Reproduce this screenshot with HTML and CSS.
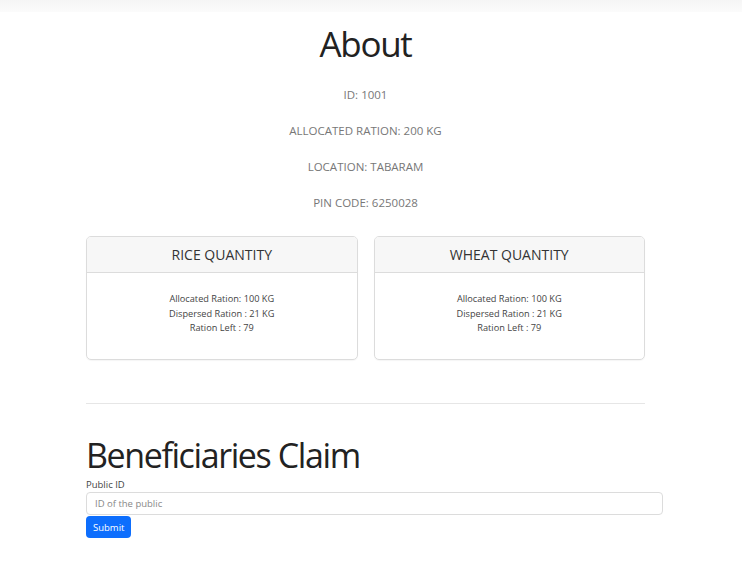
FILE: index.html
```html
<!DOCTYPE html>
<html>
<head>
<meta charset="utf-8">
<link rel="stylesheet" href="styles.css">
</head>
<body>
<div class="topbar"></div>
<main class="container">
  <section class="about">
    <h2 class="about-title">About</h2>
    <p class="info">ID: 1001</p>
    <p class="info">ALLOCATED RATION: 200 KG</p>
    <p class="info">LOCATION: TABARAM</p>
    <p class="info">PIN CODE: 6250028</p>
  </section>
  <section class="cards">
    <div class="card">
      <div class="card-header">RICE QUANTITY</div>
      <div class="card-body">
        <div>Allocated Ration: 100 KG</div>
        <div>Dispersed Ration : 21 KG</div>
        <div>Ration Left : 79</div>
      </div>
    </div>
    <div class="card">
      <div class="card-header">WHEAT QUANTITY</div>
      <div class="card-body">
        <div>Allocated Ration: 100 KG</div>
        <div>Dispersed Ration : 21 KG</div>
        <div>Ration Left : 79</div>
      </div>
    </div>
  </section>
  <hr class="divider">
  <section class="claim">
    <h1 class="claim-title">Beneficiaries Claim</h1>
    <label class="label" for="pid">Public ID</label>
    <input class="input" id="pid" type="text" placeholder="ID of the public">
    <button class="btn">Submit</button>
  </section>
</main>
</body>
</html>
```
FILE: styles.css
```css
html, body {
  margin: 0;
  padding: 0;
  background: #fff;
}
body {
  font-family: "Open Sans", "Noto Sans", sans-serif;
  color: #212529;
}
.topbar {
  height: 12px;
  background: linear-gradient(#f5f5f5, #fbfbfb);
}
.container {
  width: 559px;
  margin-left: 86px;
  display: flex;
  flex-direction: column;
}
.about {
  display: flex;
  flex-direction: column;
  align-items: center;
}
.about-title {
  margin: 12px 0 0;
  font-size: 35px;
  font-weight: 400;
  line-height: 40px;
  color: #222;
  letter-spacing: -1.3px;
}
.info {
  margin: 0;
  height: 36px;
  line-height: 36px;
  font-size: 11.5px;
  color: #777;
}
.info:first-of-type {
  margin-top: 13px;
}
.cards {
  display: flex;
  gap: 16px;
  margin-top: 15px;
}
.card {
  flex: 1;
  height: 122px;
  border: 1px solid #dcdcdc;
  border-radius: 5px;
  overflow: hidden;
  display: flex;
  flex-direction: column;
  box-shadow: 0 1px 1px rgba(0,0,0,0.04);
}
.card-header {
  height: 35px;
  line-height: 35px;
  background: #f7f7f7;
  border-bottom: 1px solid #dcdcdc;
  text-align: center;
  font-size: 14px;
  color: #333;
}
.card-body {
  padding-top: 19px;
  text-align: center;
  font-size: 9.2px;
  line-height: 14.5px;
  color: #444;
}
.divider {
  width: 100%;
  margin: 43px 0 0;
  border: 0;
  border-top: 1px solid #e6e6e6;
}
.claim {
  display: flex;
  flex-direction: column;
  align-items: flex-start;
}
.claim-title {
  margin: 32px 0 0;
  font-size: 34px;
  font-weight: 400;
  line-height: 38px;
  color: #222;
  letter-spacing: -1.4px;
}
.label {
  font-size: 9.5px;
  line-height: 14px;
  color: #444;
  margin-top: 4px;
}
.input {
  box-sizing: border-box;
  width: 577px;
  height: 23px;
  margin-top: 0;
  padding: 0 8px;
  border: 1px solid #dcdcdc;
  border-radius: 4px;
  font-family: inherit;
  font-size: 9.5px;
  color: #333;
  outline: none;
}
.input::placeholder {
  color: #888;
}
.btn {
  margin-top: 1px;
  height: 22px;
  padding: 0 7px;
  border: 0;
  border-radius: 4px;
  background: #0d6efd;
  color: #fff;
  font-family: inherit;
  font-size: 9.5px;
}
```
